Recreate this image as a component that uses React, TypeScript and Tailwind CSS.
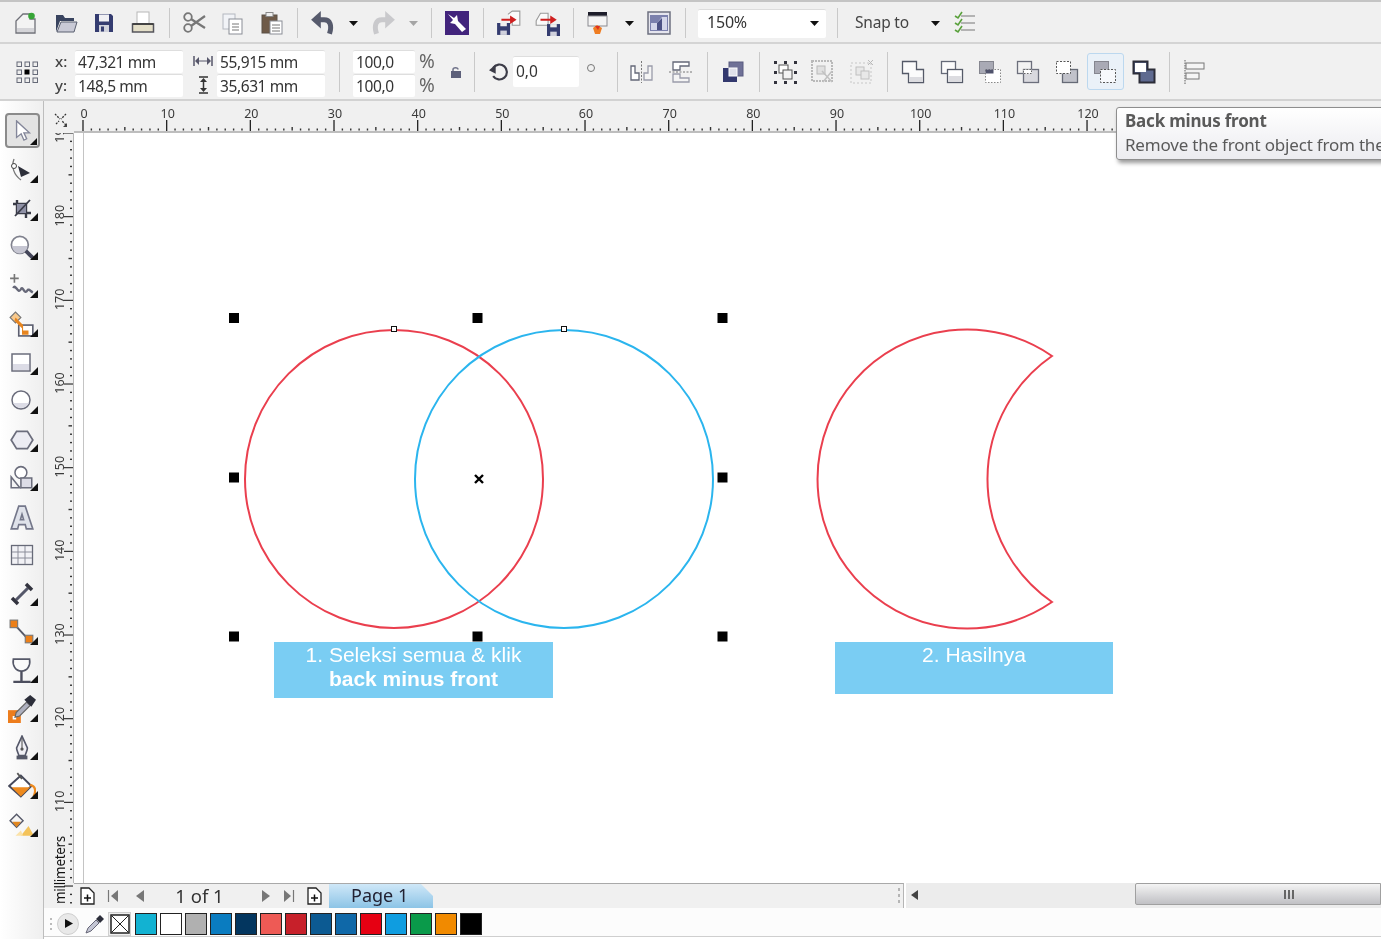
import React from "react";

const G = "#6f7078";
const Ico = ({ s = 24, children }: { s?: number; children: React.ReactNode }) => (
  <svg width={s} height={s} viewBox="0 0 24 24" className="shrink-0 block">{children}</svg>
);
const Slot = ({ c, children }: { c: string; children?: React.ReactNode }) => (
  <div className={`${c} shrink-0 flex items-center justify-center`}>{children}</div>
);
const Sep = ({ c, h = "h-[30px]" }: { c: string; h?: string }) => (
  <div className={`${c} shrink-0 flex items-center justify-center`}>
    <div className={`${h} w-px bg-[#c9c9c9]`} />
  </div>
);
const Caret = ({ light }: { light?: boolean }) => (
  <svg width="9" height="5" viewBox="0 0 9 5" className="shrink-0"><path d="M0 0H9L4.500 5Z" fill={light ? "#a5a5a5" : "#111"} /></svg>
);

/* top toolbar */
const New = () => <Ico><path d="M2 22V10L9 3H16V8H21V22Z" fill="#f3f3f3" stroke={G} strokeWidth="1.300" /><path d="M3 17H20V21H3Z" fill="#d4d4d8" /><circle cx="17.500" cy="5" r="3.300" fill="#37a537" /></Ico>;
const Open = () => <Ico><path d="M2 21V4H9L11 7H20V10H6L2 21Z" fill="#39445f" /><path d="M3 21L7 11H23L20 21Z" fill="#c9cad6" stroke="#5a6070" /></Ico>;
const Save = () => <Ico><path d="M3 3H19L21 5V21H3Z" fill="#343c70" /><rect x="7" y="3.500" width="10" height="7" fill="#f0f0f4" /><rect x="7" y="14" width="10" height="7" fill="#d0d2dc" /><rect x="9" y="15.500" width="3" height="5" fill="#343c70" /></Ico>;
const Print = () => <Ico><rect x="6" y="1" width="12" height="12" fill="#fff" stroke="#b8b8b8" /><path d="M1.500 13H22.500V21H1.500Z" fill="#e4dfc9" stroke="#55555c" strokeWidth="1.500" /><path d="M1.500 13H22.500" stroke="#333" strokeWidth="1.500" /></Ico>;
const Cut = () => <Ico><circle cx="6" cy="6" r="3.800" fill="none" stroke="#777" strokeWidth="1.800" /><circle cx="6" cy="17" r="3.800" fill="none" stroke="#777" strokeWidth="1.800" /><path d="M9 8L23 17M9 15L23 5" stroke="#777" strokeWidth="2.200" /></Ico>;
const Copy = () => <Ico><rect x="2" y="3" width="12" height="15" fill="#f1f3f7" stroke="#b4b8c0" /><rect x="8" y="8" width="13" height="15" fill="#fff" stroke="#8a8d96" /><path d="M11 13H18M11 16H18M11 19H18" stroke="#777" /></Ico>;
const Paste = () => <Ico><rect x="2" y="4" width="15" height="18" fill="#6e5a48" stroke="#5a5046" /><rect x="6" y="1.500" width="7" height="4" fill="#eee" stroke="#888" /><rect x="10" y="10" width="12" height="13" fill="#fff" stroke="#8a8d96" /><path d="M12 14H20M12 17H20M12 20H20" stroke="#777" /></Ico>;
const Undo = ({ c = "#565a6c" }: { c?: string }) => <Ico s={26}><path d="M10 1L1 9L10 17Z" fill={c} /><path d="M8 9H13C18.500 9 20.500 14 18 22" fill="none" stroke={c} strokeWidth="4.600" /></Ico>;
const Purple = () => <svg width="24" height="24" viewBox="0 0 24 24" className="shrink-0"><rect width="24" height="24" fill="#42247c" /><path d="M3 3L9 7L12 4L13 10L21 18L17 21L10 13L5 12L8 9Z" fill="#fff" /></svg>;
const Imp = () => <Ico s={26}><path d="M11 4L15 1H22V14H15V9" fill="#fafafa" stroke="#999" /><rect x="1" y="12" width="12" height="11" fill="#343c70" /><rect x="4" y="12" width="6" height="3" fill="#eee" /><rect x="4" y="19" width="6" height="4" fill="#cfd0dc" /><path d="M5 8H13V5L19 9L13 13V10H5Z" fill="#cf1f1f" /></Ico>;
const Exp = () => <Ico s={26}><path d="M2 10L6 3H13V14H2Z" fill="#fafafa" stroke="#999" /><rect x="12" y="13" width="12" height="11" fill="#343c70" /><rect x="15" y="13" width="6" height="3" fill="#eee" /><rect x="15" y="20" width="6" height="4" fill="#cfd0dc" /><path d="M6 8H15V5L21 9L15 13V10H6Z" fill="#cf1f1f" /></Ico>;
const Publish = () => <Ico s={24}><rect x="2" y="1" width="19" height="4" fill="#1d1d2a" /><rect x="2" y="5" width="19" height="10" fill="#f4f4f4" stroke="#8a8a90" /><path d="M7 17L11 14L16 17L14 23H9Z" fill="#ef7d22" /><path d="M9 15H14L12 19Z" fill="#e03020" /></Ico>;
const Win = () => <Ico s={24}><rect x="1" y="1" width="22" height="22" fill="#e5e5ee" stroke="#6d7080" strokeWidth="1.500" /><rect x="3" y="4" width="18" height="16" fill="#7b80ad" /><path d="M10 12L15 6H20V19H4V12Z" fill="#d4d6ea" /><path d="M10 19V12L15 7V19Z" fill="#4d5285" /></Ico>;
const Checks = () => <Ico s={24}><path d="M8 5H22M8 12H22M8 19H22" stroke="#777" strokeWidth="1.200" /><path d="M2 5L5 7L9 1M2 12L5 14L9 8M2 19L5 21L9 15" fill="none" stroke="#5aa13c" strokeWidth="1.600" /></Ico>;

/* property bar */
const Pos = () => <Ico s={24}>{[[2, 2], [10, 2], [18, 2], [2, 10], [18, 10], [2, 18], [10, 18], [18, 18]].map(([x, y]) => <rect key={`${x}${y}`} x={x} y={y} width="4.500" height="4.500" fill="#eee" stroke="#666a78" />)}<rect x="9.500" y="9.500" width="5" height="5" fill="#000" /></Ico>;
const WIcon = () => <svg width="20" height="10" viewBox="0 0 20 10"><path d="M1 0V10M19 0V10" stroke="#56566a" strokeWidth="1.500" /><path d="M2 5L6 1V9ZM18 5L14 1V9Z" fill="#56566a" /><path d="M6 5H14" stroke="#56566a" /></svg>;
const HIcon = () => <svg width="11" height="18" viewBox="0 0 11 18"><path d="M1 1H10M1 17H10" stroke="#333" strokeWidth="1.500" /><path d="M5.500 2L9 6H2ZM5.500 16L9 12H2Z" fill="#333" /><path d="M5.500 6V12" stroke="#333" strokeWidth="1.500" /></svg>;
const Lock = () => <svg width="12" height="12" viewBox="0 0 12 12"><path d="M3 5V3.500C3 1 8 1 8 3.500" fill="none" stroke="#70738a" strokeWidth="1.500" /><rect x="1" y="5" width="10" height="7" fill="#5d607a" /></svg>;
const Rot = () => <Ico s={20}><path d="M5 7A9 9 0 1 1 5 17" fill="none" stroke="#3c3c48" strokeWidth="2.600" /><path d="M0 10L8 3V14Z" fill="#3c3c48" /></Ico>;
const Mirror = () => <Ico s={24}><path d="M11.500 1V23" stroke="#777" strokeWidth="1" strokeDasharray="2 1.500" /><path d="M1 6H5V13H9V20H1Z" fill="#fff" stroke="#646878" strokeWidth="1.300" /><path d="M22 6H18V13H14V20H22Z" fill="#f4f4f4" stroke="#9a9caa" strokeWidth="1.300" /></Ico>;
const MirrorV = () => <Ico s={24}><path d="M0 12H24" stroke="#777" strokeDasharray="2 1.500" /><path d="M4 2H20V6H11V10H4Z" fill="#fff" stroke="#646878" strokeWidth="1.300" /><path d="M4 22H20V18H11V14H4Z" fill="#f4f4f4" stroke="#9a9caa" strokeWidth="1.300" /></Ico>;
const Group = () => <Ico s={24}><rect x="8" y="2" width="14" height="14" fill="#6f7197" stroke="#5a5c80" /><rect x="2" y="8" width="14" height="14" fill="#33386e" /><rect x="8" y="8" width="8" height="8" fill="#dfe0ea" stroke="#fff" /></Ico>;
const CombineI = () => <svg width="26" height="26" viewBox="0 0 26 26"><rect x="7" y="6" width="9" height="8" fill="#fff" stroke="#555" /><rect x="11" y="11" width="9" height="9" fill="#f3f3f3" stroke="#555" />{[[2, 2], [12, 2], [22, 2], [2, 12], [22, 12], [2, 22], [12, 22], [22, 22]].map(([x, y]) => <rect key={`${x}${y}`} x={x} y={y} width="3" height="3" fill="#33333d" />)}</svg>;
const BreakI = () => <svg width="26" height="26" viewBox="0 0 26 26" opacity="0.45"><rect x="2" y="2" width="20" height="20" fill="none" stroke="#777" strokeWidth="2" strokeDasharray="2 1" /><rect x="7" y="7" width="8" height="8" fill="#ccc" stroke="#777" /><path d="M12 12L22 23M22 12L13 23" stroke="#888" strokeWidth="1.500" /></svg>;
const UngroupI = () => <svg width="26" height="26" viewBox="0 0 26 26" opacity="0.4"><rect x="2" y="4" width="20" height="20" fill="none" stroke="#888" strokeDasharray="2 2" /><rect x="7" y="8" width="8" height="8" fill="#ddd" stroke="#777" /><rect x="12" y="12" width="8" height="8" fill="#ddd" stroke="#777" /><path d="M19 1L24 6M24 1L19 6" stroke="#666" /></svg>;

const Bk = { x: 2.500, y: 2.500, width: 14, height: 12 };
const Fr = { x: 8.500, y: 10.500, width: 15, height: 13 };
const Weld = () => <svg width="26" height="26" viewBox="0 0 26 26"><path d="M2.500 2.500H16.500V10.500H23.500V23.500H8.500V14.500H2.500Z" fill="#fbfbfb" stroke="#555a68" strokeWidth="1.300" /><rect x="9" y="18" width="14" height="5" fill="#dcdce0" /></svg>;
const Trim = () => <svg width="26" height="26" viewBox="0 0 26 26"><rect {...Bk} fill="#fbfbfb" stroke="#656a78" strokeWidth="1.300" /><rect {...Fr} fill="#fff" stroke="#555a68" strokeWidth="1.300" /><rect x="9.500" y="17" width="13" height="6" fill="#dcdce0" /></svg>;
const Inter = () => <svg width="26" height="26" viewBox="0 0 26 26"><rect {...Bk} fill="#a9aab5" stroke="#85868f" /><rect {...Fr} fill="#fff" stroke="#888" strokeDasharray="1.500 1.500" /><rect x="8.500" y="10.500" width="8" height="4" fill="#50536c" /></svg>;
const Simp = () => <svg width="26" height="26" viewBox="0 0 26 26"><rect {...Bk} fill="#f2f2f2" stroke="#6c6f7c" strokeWidth="1.300" /><rect {...Fr} fill="#d9d9de" stroke="#6c6f7c" strokeWidth="1.300" /><rect x="8.500" y="10.500" width="8" height="4" fill="#fff" stroke="#666" strokeDasharray="1.500 1.500" /></svg>;
const FMB = () => <svg width="26" height="26" viewBox="0 0 26 26"><rect {...Fr} fill="#c1c2ca" stroke="#666a76" strokeWidth="1.300" /><rect {...Bk} fill="#fff" stroke="#555" strokeDasharray="2 1.500" /></svg>;
const BMF = () => <svg width="26" height="26" viewBox="0 0 26 26"><rect {...Bk} fill="#a9aab5" stroke="#85868f" /><rect {...Fr} fill="#f7f9fc" stroke="#555" strokeDasharray="2 1.500" /></svg>;
const Bound = () => <svg width="26" height="26" viewBox="0 0 26 26"><path d="M2.500 2.500H16.500V10.500H23.500V23.500H8.500V14.500H2.500Z" fill="#5f6a90" stroke="#2c2d38" strokeWidth="2" /><rect x="4" y="4" width="11" height="9" fill="#fff" /></svg>;
const Align = () => <svg width="24" height="26" viewBox="0 0 24 26"><path d="M2 1V25" stroke="#777" strokeWidth="1.200" strokeDasharray="1.500 1" /><rect x="3" y="4" width="18" height="6" fill="#f5f5f5" stroke="#777" /><rect x="3" y="14" width="13" height="6" fill="#f5f5f5" stroke="#777" /></svg>;

/* tools */
const Pick = () => <Ico s={22}><path d="M5 1V19L10 15L13 22L16 20.500L13 14H19Z" fill="#fff" stroke="#84879a" strokeWidth="1.500" /></Ico>;
const ShapeT = () => <Ico><path d="M4 1C1 9 4 17 11 22" fill="none" stroke="#777" strokeWidth="1.300" /><circle cx="4" cy="8" r="2.500" fill="#fff" stroke="#444" /><path d="M8 8L20 15L11 19Z" fill="#2d2f3a" /></Ico>;
const Crop = () => <Ico><path d="M7 3V16H21M3 7H16V21" fill="none" stroke="#3a3c48" strokeWidth="2.400" /><path d="M7 7H16V16H7Z" fill="#8f91a6" /><path d="M5 19L20 3" stroke="#3a3c48" strokeWidth="1.800" /></Ico>;
const Zoom = () => <Ico s={26}><circle cx="10" cy="10" r="7.800" fill="#fff" stroke="#80828e" strokeWidth="1.600" /><path d="M3 11H17A7 7 0 0 1 3 11Z" fill="#c6c6d2" /><path d="M15.500 15.500L22 22" stroke="#44465a" strokeWidth="3.500" /></Ico>;
const Free = () => <Ico s={26}><path d="M5 1V9M1 5H9" stroke="#777" strokeWidth="1.500" /><path d="M4 14C6 9 8 20 11 15C13 11 14 21 17 16C18 14 20 17 22 18" fill="none" stroke="#666878" strokeWidth="2.200" /></Ico>;
const Smart = () => <Ico s={26}><path d="M1 6L6 1L11 6L6 11Z" fill="#f7c98d" stroke="#777" /><rect x="9" y="13" width="13" height="10" fill="#fff" stroke="#5c5f70" strokeWidth="1.500" /><path d="M6 6L13 13V18H18V22H12V16L5 9Z" fill="#e7851f" /></Ico>;
const Rect = () => <Ico s={24}><rect x="2" y="3" width="18" height="17" fill="#fff" stroke="#6b6d7c" strokeWidth="1.500" /><rect x="3" y="13" width="16" height="6" fill="#dcdce6" /></Ico>;
const Ell = () => <Ico s={24}><circle cx="11" cy="11" r="9" fill="#fff" stroke="#6b6d7c" strokeWidth="1.500" /><path d="M3 14H19A9 9 0 0 1 3 14Z" fill="#dcdce6" /></Ico>;
const Hex = () => <Ico s={26}><path d="M7 4H17L22 12L17 20H7L2 12Z" fill="#ececf3" stroke="#6b6d7c" strokeWidth="1.600" /></Ico>;
const Basic = () => <Ico s={26}><circle cx="11" cy="7" r="5.500" fill="#fff" stroke="#6b6d7c" strokeWidth="1.400" /><path d="M2 21V11L10 21Z" fill="#f4f4f4" stroke="#6b6d7c" strokeWidth="1.400" /><rect x="11" y="12" width="10" height="9" fill="#dcdce6" stroke="#6b6d7c" strokeWidth="1.400" /></Ico>;
const TextT = () => <Ico s={26}><path d="M2 23L9 2H15L22 23H16L15 19H9L8 23ZM10.500 14.500H13.500L12 9.500Z" fill="#dfe2ea" stroke="#74778a" strokeWidth="1.500" /></Ico>;
const Table = () => <Ico s={24}><rect x="1.500" y="2.500" width="21" height="19" fill="#f2f2f6" stroke="#676a78" strokeWidth="1.300" /><path d="M8 3V21M15 3V21M2 9H22M2 15H22" stroke="#8c8e9a" /></Ico>;
const Dim = () => <Ico s={24}><path d="M6 18L18 6" stroke="#55586a" strokeWidth="3" /><path d="M2 16L8 22M16 2L22 8" stroke="#33343f" strokeWidth="3.500" /></Ico>;
const Conn = () => <Ico s={26}><path d="M5 5L18 19" stroke="#555868" strokeWidth="1.800" /><rect x="1" y="1" width="7" height="7" fill="#ec7f18" stroke="#777" /><rect x="15" y="15" width="7" height="7" fill="#ec7f18" stroke="#777" /></Ico>;
const Glass = () => <Ico s={26}><path d="M4 1H19C20 7 17 12 11.500 12C6 12 3 7 4 1Z" fill="#fafafa" stroke="#555868" strokeWidth="1.500" /><path d="M11.500 12V21M4 22H20" stroke="#4c4e5e" strokeWidth="2.200" /></Ico>;
const Dropper = () => <Ico s={28}><rect x="0" y="13" width="11" height="11" fill="#ed7d1d" /><rect x="4" y="18" width="3" height="3" fill="#fff" /><path d="M7 15L16 6L19 9L10 18L6 19Z" fill="#aeb0bf" stroke="#666" /><path d="M14 4L19 0L24 4L20 10Z" fill="#2c2e3a" /></Ico>;
const Pen = () => <Ico s={26}><path d="M12 1L17 12C17 15 15 17 15 19H9C9 17 7 15 7 12Z" fill="#f0f0f5" stroke="#55586a" strokeWidth="1.500" /><path d="M12 3V12" stroke="#555" /><circle cx="12" cy="13" r="1.500" fill="#555" /><rect x="7" y="19" width="10" height="3.500" fill="#555868" /></Ico>;
const Fill = () => <Ico s={28}><path d="M1 12L11 3L20 12L11 21Z" fill="#fff" stroke="#45485a" strokeWidth="1.700" /><path d="M3 13H19L11 21Z" fill="#ee8a1e" /><path d="M8 1L12 6" stroke="#555" strokeWidth="1.500" /><path d="M19 11C24 12 24 17 22 21" fill="none" stroke="#ee8a1e" strokeWidth="2" /></Ico>;
const IFill = () => <Ico s={26}><path d="M1 8L7 2L13 8L7 14Z" fill="#f5f5f5" stroke="#555868" strokeWidth="1.300" /><path d="M3 9H11L7 14Z" fill="#e2871e" /><path d="M11 22L18 13L23 22Z" fill="#f4c35a" /><path d="M6 22L11 17L13 22Z" fill="#fbe2a8" /></Ico>;

const Tool = ({ children }: { children: React.ReactNode }) => (
  <div className="relative h-[38.5px] w-full flex items-center justify-center">
    {children}
    <div className="absolute right-[5px] bottom-[7px] w-0 h-0 border-l-[8px] border-l-transparent border-b-[8px] border-b-[#111]" />
  </div>
);
const tools = [ShapeT, Crop, Zoom, Free, Smart, Rect, Ell, Hex, Basic, TextT, Table, Dim, Conn, Glass, Dropper, Pen, Fill, IFill];
const noFly = new Set([9, 10]);

const Input = ({ c, children }: { c: string; children: React.ReactNode }) => (
  <div className={`${c} h-[23px] bg-white rounded-[2px] border-t border-[#dedede] pl-[3px] text-[15.500px] leading-[22px] tracking-[-0.400px] text-[#333] whitespace-nowrap overflow-hidden`}>{children}</div>
);

const RULE = 83.67;
const HRuler = () => {
  const ticks = Array.from({ length: 156 }, (_, i) => i);
  return (
    <svg width="1337" height="32" viewBox="44 101 1337 32" className="block">
      <path d="M74 132H1381" stroke="#8b8b8b" strokeWidth="1" />
      {ticks.map((i) => {
        const x = 83 + (i * RULE) / 10;
        if (i % 10 === 0) return <path key={i} d={`M${x} 120V131`} stroke="#222" strokeWidth="1.300" />;
        return <rect key={i} x={x - 0.7} y={i % 5 === 0 ? 127 : 128.500} width="1.400" height={i % 5 === 0 ? 3.500 : 2} fill="#333" />;
      })}
      {Array.from({ length: 13 }, (_, i) => i * 10).map((n) => (
        <text key={n} x={83 + (n * RULE) / 10 + 1} y="118" textAnchor="middle" fontSize="12.500" fill="#3a3a3a" fontFamily="Noto Sans, sans-serif">{n}</text>
      ))}
      <path d="M55 114L60 119M66 114L61 119M56 124L59 121M66 125L62 121" stroke="#333" strokeWidth="1.300" strokeDasharray="2 1.200" />
      <path d="M63 127L67 123L67 127Z" fill="#444" />
    </svg>
  );
};
const VRuler = () => {
  const ticks = Array.from({ length: 94 }, (_, i) => i);
  return (
    <svg width="30" height="775" viewBox="44 133 30 775" className="block">
      <path d="M74 133V883" stroke="#7e7e7e" strokeWidth="1" />
      {ticks.map((i) => {
        const y = 133 + (i * RULE) / 10;
        if (i % 10 === 0) return <path key={i} d={`M64 ${y}H73`} stroke="#222" strokeWidth="1.100" />;
        return <rect key={i} x={i % 5 === 0 ? 68.500 : 70} y={y - 0.7} width={i % 5 === 0 ? 3.500 : 2} height="1.400" fill="#333" />;
      })}
      {[190, 180, 170, 160, 150, 140, 130, 120, 110].map((n, idx) => {
        const y = 132 + idx * RULE;
        return <text key={n} x="0" y="0" transform={`translate(64 ${y}) rotate(-90)`} textAnchor="middle" fontSize="12.500" fill="#3a3a3a" fontFamily="Noto Sans, sans-serif">{n}</text>;
      })}
      <text transform="translate(65 904) rotate(-90)" fontSize="13.500" fill="#111" fontFamily="Noto Sans, sans-serif" letterSpacing="-0.300">millimeters</text>
    </svg>
  );
};

const Canvas = () => {
  const hs = [[234, 318], [477.500, 318], [722.500, 318], [234, 477.500], [722.500, 477.500], [234, 636.500], [477.500, 636.500], [722.500, 636.500]];
  return (
    <svg width="1307" height="750" viewBox="74 133 1307 750" className="absolute inset-0">
      <path d="M83.500 133V883" stroke="#c4c4c4" />
      <circle cx="394" cy="479" r="149" fill="none" stroke="#ea3f4e" strokeWidth="2" />
      <circle cx="564" cy="479" r="149" fill="none" stroke="#2bb5ee" strokeWidth="2" />
      {hs.map(([x, y]) => <rect key={`${x}-${y}`} x={x - 5} y={y - 5} width="10" height="10" fill="#000" />)}
      <rect x="391.500" y="326.500" width="5" height="5" fill="#fff" stroke="#111" />
      <rect x="561.500" y="326.500" width="5" height="5" fill="#fff" stroke="#111" />
      <path d="M475 475L483 483M483 475L475 483" stroke="#000" strokeWidth="2.400" />
      <path d="M1052 356A149.500 149.500 0 1 0 1052 602A149.500 149.500 0 0 1 1052 356Z" fill="none" stroke="#ea3f4e" strokeWidth="2" />
    </svg>
  );
};

const colors = ["bg-[#12b2d2]", "bg-white", "bg-[#b0b0b0]", "bg-[#0a7cc0]", "bg-[#03365f]", "bg-[#ee5a55]", "bg-[#c7202a]", "bg-[#0c5a92]", "bg-[#0f68a8]", "bg-[#e60012]", "bg-[#0f9de0]", "bg-[#0a9a4a]", "bg-[#f18a00]", "bg-black"];

const DocAdd = () => <svg width="15" height="18" viewBox="0 0 15 18"><path d="M1 1H9L14 6V17H1Z" fill="#fff" stroke="#222" strokeWidth="1.300" /><path d="M4 11H11M7.500 7.500V14.500" stroke="#111" strokeWidth="1.500" /></svg>;
const Tri = ({ d, bar }: { d: "l" | "r"; bar?: boolean }) => (
  <svg width="12" height="14" viewBox="0 0 12 14">
    {d === "l" ? <path d={bar ? "M11 1V13L4 7Z" : "M10 1V13L2 7Z"} fill="#777" /> : <path d={bar ? "M1 1V13L8 7Z" : "M2 1V13L10 7Z"} fill="#777" />}
    {bar && <path d={d === "l" ? "M1.500 1V13" : "M10.500 1V13"} stroke="#777" strokeWidth="1.200" />}
  </svg>
);

export default function App() {
  return (
    <div className="relative w-[1381px] h-[939px] overflow-hidden bg-white flex flex-col font-['Noto_Sans',sans-serif] text-[#333] blur-[0.4px]">
      {/* standard toolbar */}
      <div className="h-[44px] shrink-0 flex items-center pl-[7px] pt-[2px] bg-[#f0f0f0] border-t-2 border-t-[#c4c4c4] border-b-2 border-b-[#d4d4d4]">
        <Slot c="w-[38px]"><New /></Slot>
        <Slot c="w-[42px]"><Open /></Slot>
        <Slot c="w-[34px]"><Save /></Slot>
        <Slot c="w-[44px]"><Print /></Slot>
        <Sep c="w-[8px]" />
        <Slot c="w-[42px]"><Cut /></Slot>
        <Slot c="w-[36px]"><Copy /></Slot>
        <Slot c="w-[42px]"><Paste /></Slot>
        <Sep c="w-[8px]" />
        <Slot c="w-[44px]"><Undo /></Slot>
        <Slot c="w-[16px]"><Caret /></Slot>
        <Slot c="w-[44px]"><div className="-scale-x-100"><Undo c="#c9c9cc" /></div></Slot>
        <Slot c="w-[16px]"><Caret light /></Slot>
        <Sep c="w-[20px]" />
        <Slot c="w-[32px]"><Purple /></Slot>
        <Sep c="w-[20px]" />
        <Slot c="w-[32px]"><Imp /></Slot>
        <Slot c="w-[44px]"><Exp /></Slot>
        <Sep c="w-[8px]" />
        <Slot c="w-[42px]"><Publish /></Slot>
        <Slot c="w-[20px]"><Caret /></Slot>
        <Slot c="w-[40px]"><Win /></Slot>
        <Sep c="w-[12px]" />
        <div className="ml-[7px] w-[128px] h-[29px] shrink-0 bg-white rounded-[2px] border-t border-[#dcdcdc] flex items-center justify-between pl-[9px] pr-[7px] text-[16px] leading-[24px] tracking-[-0.200px]">
          <span className="-translate-y-[2px]">150%</span><Caret />
        </div>
        <Sep c="w-[22px]" />
        <div className="ml-[7px] w-[56px] shrink-0 text-[15.500px] tracking-[-0.200px] text-[#444] whitespace-nowrap">Snap to</div>
        <Slot c="w-[49px]"><Caret /></Slot>
        <Slot c="w-[10px]"><Checks /></Slot>
      </div>

      {/* property bar */}
      <div className="h-[57px] shrink-0 flex items-center pl-[15px] bg-[#f1f1f1] border-b-2 border-b-[#d2d2d2]">
        <Slot c="w-[24px]"><Pos /></Slot>
        <div className="ml-[16px] mt-[3px] w-[20px] shrink-0 flex flex-col gap-[1px] text-[15px] font-medium leading-[23px] text-[#444]"><span>x:</span><span>y:</span></div>
        <div className="w-[108px] mt-[3px] shrink-0 flex flex-col gap-[1px]"><Input c="w-full">47,321 mm</Input><Input c="w-full">148,5 mm</Input></div>
        <div className="w-[34px] mt-[3px] shrink-0 pl-[6px] flex flex-col gap-[1px] items-center"><div className="h-[23px] flex items-center"><WIcon /></div><div className="h-[23px] flex items-center"><HIcon /></div></div>
        <div className="w-[108px] mt-[3px] shrink-0 flex flex-col gap-[1px]"><Input c="w-full">55,915 mm</Input><Input c="w-full">35,631 mm</Input></div>
        <Sep c="w-[28px]" h="h-[40px]" />
        <div className="w-[62px] mt-[3px] shrink-0 flex flex-col gap-[1px]"><Input c="w-full">100,0</Input><Input c="w-full">100,0</Input></div>
        <div className="w-[24px] mt-[3px] shrink-0 flex flex-col gap-[1px] items-center text-[19px] leading-[23px] text-[#666]"><span>%</span><span>%</span></div>
        <Slot c="w-[34px]"><Lock /></Slot>
        <Sep c="w-[2px]" h="h-[40px]" />
        <Slot c="w-[38px] pl-[10px]"><Rot /></Slot>
        <div className="w-[66px] h-[31px] shrink-0 bg-white rounded-[2px] border-t border-[#dedede] pl-[3px] text-[15.500px] leading-[28px] text-[#333]">0,0</div>
        <Slot c="w-[24px] pb-[8px]"><div className="w-[8px] h-[8px] rounded-full border border-[#777]" /></Slot>
        <Sep c="w-[28px]" h="h-[40px]" />
        <Slot c="w-[22px]"><Mirror /></Slot>
        <div className="w-[8px] shrink-0" />
        <Slot c="w-[40px]"><MirrorV /></Slot>
        <Sep c="w-[12px]" h="h-[40px]" />
        <Slot c="w-[40px]"><Group /></Slot>
        <Sep c="w-[12px]" h="h-[40px]" />
        <Slot c="w-[40px]"><CombineI /></Slot>
        <Slot c="w-[36px]"><BreakI /></Slot>
        <Slot c="w-[42px]"><UngroupI /></Slot>
        <Sep c="w-[8px]" h="h-[40px]" />
        <Slot c="w-[44px]"><Weld /></Slot>
        <Slot c="w-[34px]"><Trim /></Slot>
        <Slot c="w-[42px]"><Inter /></Slot>
        <Slot c="w-[34px]"><Simp /></Slot>
        <Slot c="w-[44px]"><FMB /></Slot>
        <Slot c="w-[32px]"><div className="w-[37px] h-[37px] shrink-0 rounded-[3px] border border-[#bcd8ef] bg-[#eaf1f8] flex items-center justify-center"><BMF /></div></Slot>
        <Slot c="w-[46px]"><Bound /></Slot>
        <Sep c="w-[4px]" h="h-[40px]" />
        <Slot c="w-[48px]"><Align /></Slot>
      </div>

      {/* work area */}
      <div className="flex-1 min-h-0 flex">
        <div className="w-[44px] shrink-0 border-r border-r-[#bdbdbd] bg-gradient-to-r from-white to-[#efefef] pt-[12px] flex flex-col">
          <div className="relative mx-auto ml-[5px] w-[35px] h-[35px] shrink-0 rounded-[4px] border-2 border-[#8b8b8b] bg-[#e3e3e3] flex items-center justify-center mb-[3px]">
            <Pick />
            <div className="absolute right-[1px] bottom-[1px] w-0 h-0 border-l-[7px] border-l-transparent border-b-[7px] border-b-[#111]" />
          </div>
          {tools.map((T, i) =>
            noFly.has(i) ? (
              <div key={i} className="h-[38.5px] w-full flex items-center justify-center"><T /></div>
            ) : (
              <Tool key={i}><T /></Tool>
            ),
          )}
        </div>
        <div className="flex-1 min-w-0 flex flex-col">
          <div className="h-[32px] shrink-0 bg-[#f0f0f0]"><HRuler /></div>
          <div className="h-[775px] shrink-0 flex">
            <div className="w-[30px] shrink-0 bg-[#f0f0f0]"><VRuler /></div>
            <div className="flex-1 min-w-0 flex flex-col">
              <div className="relative h-[750px] shrink-0 bg-white">
                <Canvas />
                <div className="absolute left-[200px] top-[509px] w-[279px] h-[56px] bg-[#7acdf3] text-white text-center text-[21px] leading-[24px] font-['Liberation_Sans',sans-serif] pt-[1px]">
                  1. Seleksi semua &amp; klik<br /><b>back minus front</b>
                </div>
                <div className="absolute left-[761px] top-[509px] w-[278px] h-[52px] bg-[#7acdf3] text-white text-center text-[21px] leading-[24px] font-['Liberation_Sans',sans-serif] pt-[1px]">
                  2. Hasilnya
                </div>
              </div>
              {/* page navigator + scroll bar */}
              <div className="h-[25px] shrink-0 flex">
                <div className="w-[830px] shrink-0 flex items-center bg-[#f0f0f0] border-t border-t-[#a9a9a9] border-r border-r-[#b5b5b5] relative">
                  <Slot c="w-[26px]"><DocAdd /></Slot>
                  <Slot c="w-[26px]"><Tri d="l" bar /></Slot>
                  <Slot c="w-[28px]"><Tri d="l" /></Slot>
                  <div className="w-[97px] shrink-0 pr-[6px] text-center text-[18.500px] leading-[24px] text-[#333] whitespace-nowrap">1 of 1</div>
                  <Slot c="w-[30px]"><Tri d="r" /></Slot>
                  <Slot c="w-[16px]"><Tri d="r" bar /></Slot>
                  <Slot c="w-[34px]"><DocAdd /></Slot>
                  <div className="ml-[-2px] w-[104px] h-[24px] shrink-0 pl-[22px] bg-gradient-to-b from-[#cfe8f8] to-[#8cc4e6] [clip-path:polygon(0_0,92px_0,104px_12px,104px_100%,0_100%)] text-[18px] leading-[23px] text-[#223]">Page 1</div>
                  <div className="absolute right-[3px] top-[4px] flex flex-col gap-[3px]">
                    <div className="w-[2px] h-[3px] bg-[#b5b5b5]" /><div className="w-[2px] h-[3px] bg-[#b5b5b5]" /><div className="w-[2px] h-[3px] bg-[#b5b5b5]" />
                  </div>
                </div>
                <div className="flex-1 min-w-0 ml-[2px] bg-[#ececec] flex items-center">
                  <Slot c="w-[20px] pr-[2px] pb-[2px]"><svg width="8" height="10" viewBox="0 0 8 10"><path d="M7 0V10L0 5Z" fill="#444" /></svg></Slot>
                  <div className="ml-[209px] flex-1 h-[22px] self-start rounded-l-[2px] border border-[#a0a0a0] bg-gradient-to-b from-[#f4f4f4] to-[#c0c0c4] flex items-center">
                    <span className="ml-[148px] flex gap-[2px]"><i className="block w-[2px] h-[9px] bg-[#666]" /><i className="block w-[2px] h-[9px] bg-[#666]" /><i className="block w-[2px] h-[9px] bg-[#666]" /></span>
                  </div>
                </div>
              </div>
            </div>
          </div>
          {/* palette */}
          <div className="h-[29px] shrink-0 flex items-center pt-[3px] bg-[#fcfcfc] border-b border-b-[#cfcfcf]">
            <div className="ml-[6px] flex flex-col gap-[3px]"><div className="w-[2px] h-[2px] bg-[#bbb]" /><div className="w-[2px] h-[2px] bg-[#bbb]" /><div className="w-[2px] h-[2px] bg-[#bbb]" /></div>
            <div className="ml-[5px] w-[22px] h-[22px] rounded-full bg-[#e9e9e9] border border-[#cfcfcf] flex items-center justify-center">
              <svg width="9" height="9" viewBox="0 0 9 9"><path d="M1 0L9 4.500L1 9Z" fill="#111" /></svg>
            </div>
            <div className="ml-[4px] w-[24px] flex items-center justify-center">
              <svg width="20" height="20" viewBox="0 0 20 20"><path d="M1 19L3 14L11 6L14 9L6 17Z" fill="#c4c6d4" stroke="#667" /><path d="M11 5L15 1L19 5L15 9Z" fill="#2c2e3a" /></svg>
            </div>
            <div className="ml-[1px] w-[23px] h-[24px] flex items-center justify-center border border-[#cfcfcf] bg-[#efefef] shrink-0">
              <svg width="20" height="20" viewBox="0 0 20 20"><rect x="1" y="1" width="18" height="18" fill="#fff" stroke="#222" strokeWidth="1.500" /><path d="M2 2L18 18M18 2L2 18" stroke="#222" /></svg>
            </div>
            <div className="ml-[4px] flex gap-[3px]">
              {colors.map((c) => <div key={c} className={`${c} w-[22px] h-[22px] border border-[#222] shrink-0`} />)}
            </div>
          </div>
        </div>
      </div>

      {/* tooltip */}
      <div className="absolute left-[1116px] top-[107px] w-[300px] h-[53px] rounded-[3px] border border-[#8e8e8e] bg-gradient-to-b from-white to-[#ececf0] shadow-[2px_3px_4px_rgba(0,0,0,0.4)] pl-[8px] pt-[1px] text-[#5a5a5a] text-[17px] leading-[24px] whitespace-nowrap tracking-[-0.200px]">
        <div className="font-bold">Back minus front</div>
        <div>Remove the front object from the</div>
      </div>
    </div>
  );
}
